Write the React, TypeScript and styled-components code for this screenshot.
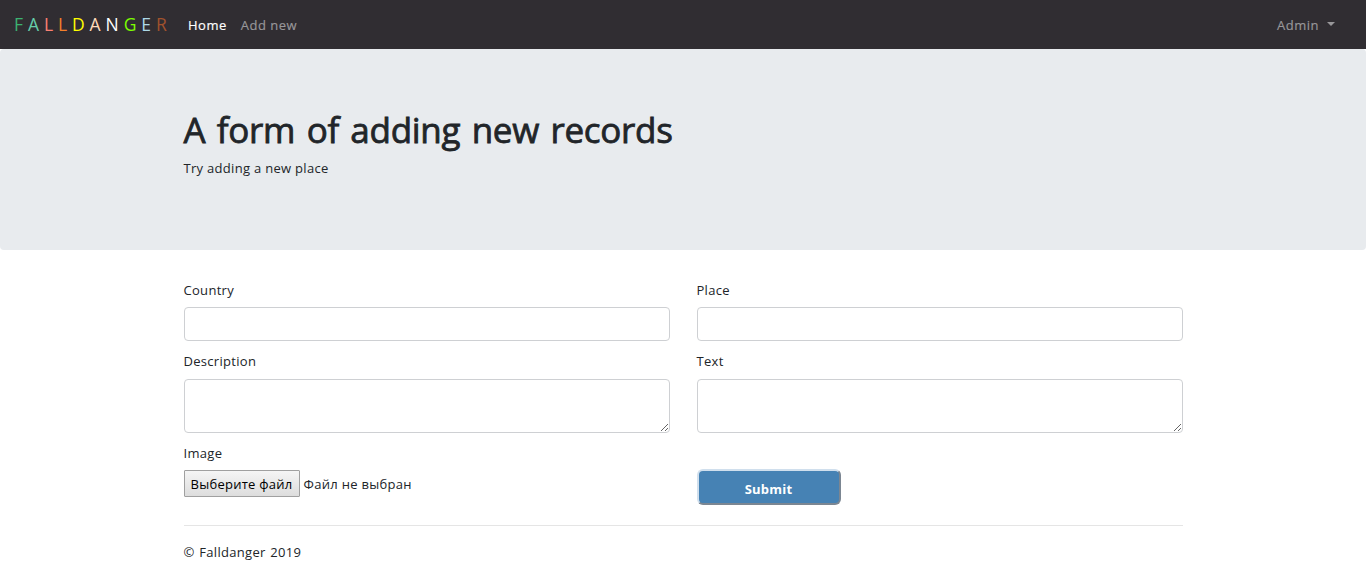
import React from "react";
import styled, { createGlobalStyle } from "styled-components";

const GlobalStyle = createGlobalStyle`
  *, *::before, *::after { box-sizing: border-box; }
  body {
    margin: 0;
    background: #fff;
    color: #212529;
    font-family: "Segoe UI", "Open Sans", "Noto Sans", sans-serif;
    font-size: 13px;
    line-height: 24px;
    letter-spacing: 0.3px;
    overflow: hidden;
  }
`;

const Navbar = styled.nav`
  display: flex;
  align-items: center;
  height: 49px;
  padding: 0 31px 0 14px;
  background: #302d32;
`;

const Brand = styled.a`
  width: 174px;
  padding-bottom: 1px;
  font-size: 17.5px;
  letter-spacing: 4.9px;
  white-space: nowrap;
`;

const Letter = styled.span<{ $color: string }>`
  color: ${(p) => p.$color};
`;

const NavLink = styled.a<{ $active?: boolean }>`
  margin-right: 14px;
  padding-top: 1px;
  letter-spacing: 0.5px;
  -webkit-text-stroke: 0.15px currentColor;
  color: ${(p) => (p.$active ? "#fff" : "#98979a")};
`;

const UserMenu = styled(NavLink)`
  display: flex;
  align-items: center;
  margin: 0 0 0 auto;
`;

const Caret = styled.span`
  margin: -3px 0 0 8px;
  border: 4px solid transparent;
  border-top-color: #98979a;
  border-bottom: 0;
`;

const Jumbotron = styled.header`
  height: 201px;
  padding-top: 59px;
  background: #e8ebee;
  border-radius: 4px;
`;

const Container = styled.div`
  width: 999px;
  margin: 0 auto;
`;

const Title = styled.h1`
  margin: 0 0 4px;
  font-size: 35px;
  font-weight: 400;
  line-height: 44px;
  letter-spacing: -0.3px;
  word-spacing: 2.7px;
  -webkit-text-stroke: 0.8px currentColor;
  white-space: nowrap;
`;

const Lead = styled.p`
  margin: 0;
`;

const Form = styled.form`
  display: grid;
  grid-template-columns: 486px 486px;
  column-gap: 27px;
  padding-top: 28px;
`;

const Field = styled.div<{ $height: number }>`
  display: flex;
  flex-direction: column;
  align-items: flex-start;
  height: ${(p) => p.$height}px;
`;

const Label = styled.label`
  height: 24px;
  margin-bottom: 5px;
`;

const Input = styled.input`
  width: 100%;
  height: 34px;
  padding: 5px 10px;
  border: 1px solid #ced0d3;
  border-radius: 4px;
  font: inherit;
`;

const TextArea = styled.textarea`
  width: 100%;
  height: 54px;
  margin-top: 1px;
  padding: 5px 10px;
  border: 1px solid #ced0d3;
  border-radius: 4px;
  font: inherit;
  resize: vertical;
`;

const FileRow = styled.div`
  display: flex;
  align-items: center;
  gap: 4px;
  white-space: nowrap;
`;

const FileButton = styled.button`
  width: 116px;
  height: 27px;
  padding: 0;
  border: 1px solid #a0a0a0;
  border-radius: 1px;
  background: linear-gradient(#f5f5f5, #dddddd);
  color: #000;
  font: inherit;
  letter-spacing: 0.25px;
`;

const Submit = styled.button`
  width: 144px;
  height: 36px;
  margin: 28px 0 0;
  padding: 3px 0 0;
  border: 2px solid;
  border-color: #d0dfed #7b8692 #7b8692 #d0dfed;
  border-radius: 6px;
  background: #4682b4;
  color: #fff;
  font: inherit;
  font-weight: 700;
  letter-spacing: 0.2px;
`;

const Footer = styled.footer`
  margin-top: 14px;
  padding-top: 14px;
  border-top: 1px solid #e5e5e5;
  word-spacing: 1px;
`;

const brand: [string, string][] = [
  ["F", "#3cb371"],
  ["A", "#66cdaa"],
  ["L", "#fa8072"],
  ["L", "#f5802a"],
  ["D", "#ffff00"],
  ["A", "#ffdab9"],
  ["N", "#ffffff"],
  ["G", "#7cfc00"],
  ["E", "#add8e6"],
  ["R", "#a0522d"],
];

export default function App() {
  return (
    <>
      <GlobalStyle />
      <Navbar>
        <Brand>
          {brand.map(([char, color], i) => (
            <Letter key={i} $color={color}>{char}</Letter>
          ))}
        </Brand>
        <NavLink $active>Home</NavLink>
        <NavLink>Add new</NavLink>
        <UserMenu>Admin<Caret /></UserMenu>
      </Navbar>
      <Jumbotron>
        <Container>
          <Title>A form of adding new records</Title>
          <Lead>Try adding a new place</Lead>
        </Container>
      </Jumbotron>
      <Container>
        <Form onSubmit={(e) => e.preventDefault()}>
          <Field $height={71}>
            <Label htmlFor="country">Country</Label>
            <Input id="country" />
          </Field>
          <Field $height={71}>
            <Label htmlFor="place">Place</Label>
            <Input id="place" />
          </Field>
          <Field $height={92}>
            <Label htmlFor="description">Description</Label>
            <TextArea id="description" />
          </Field>
          <Field $height={92}>
            <Label htmlFor="text">Text</Label>
            <TextArea id="text" />
          </Field>
          <Field $height={70}>
            <Label>Image</Label>
            <FileRow>
              <FileButton type="button">Выберите файл</FileButton>
              <span>Файл не выбран</span>
            </FileRow>
          </Field>
          <Field $height={70}>
            <Submit type="submit">Submit</Submit>
          </Field>
        </Form>
        <Footer>© Falldanger 2019</Footer>
      </Container>
    </>
  );
}
